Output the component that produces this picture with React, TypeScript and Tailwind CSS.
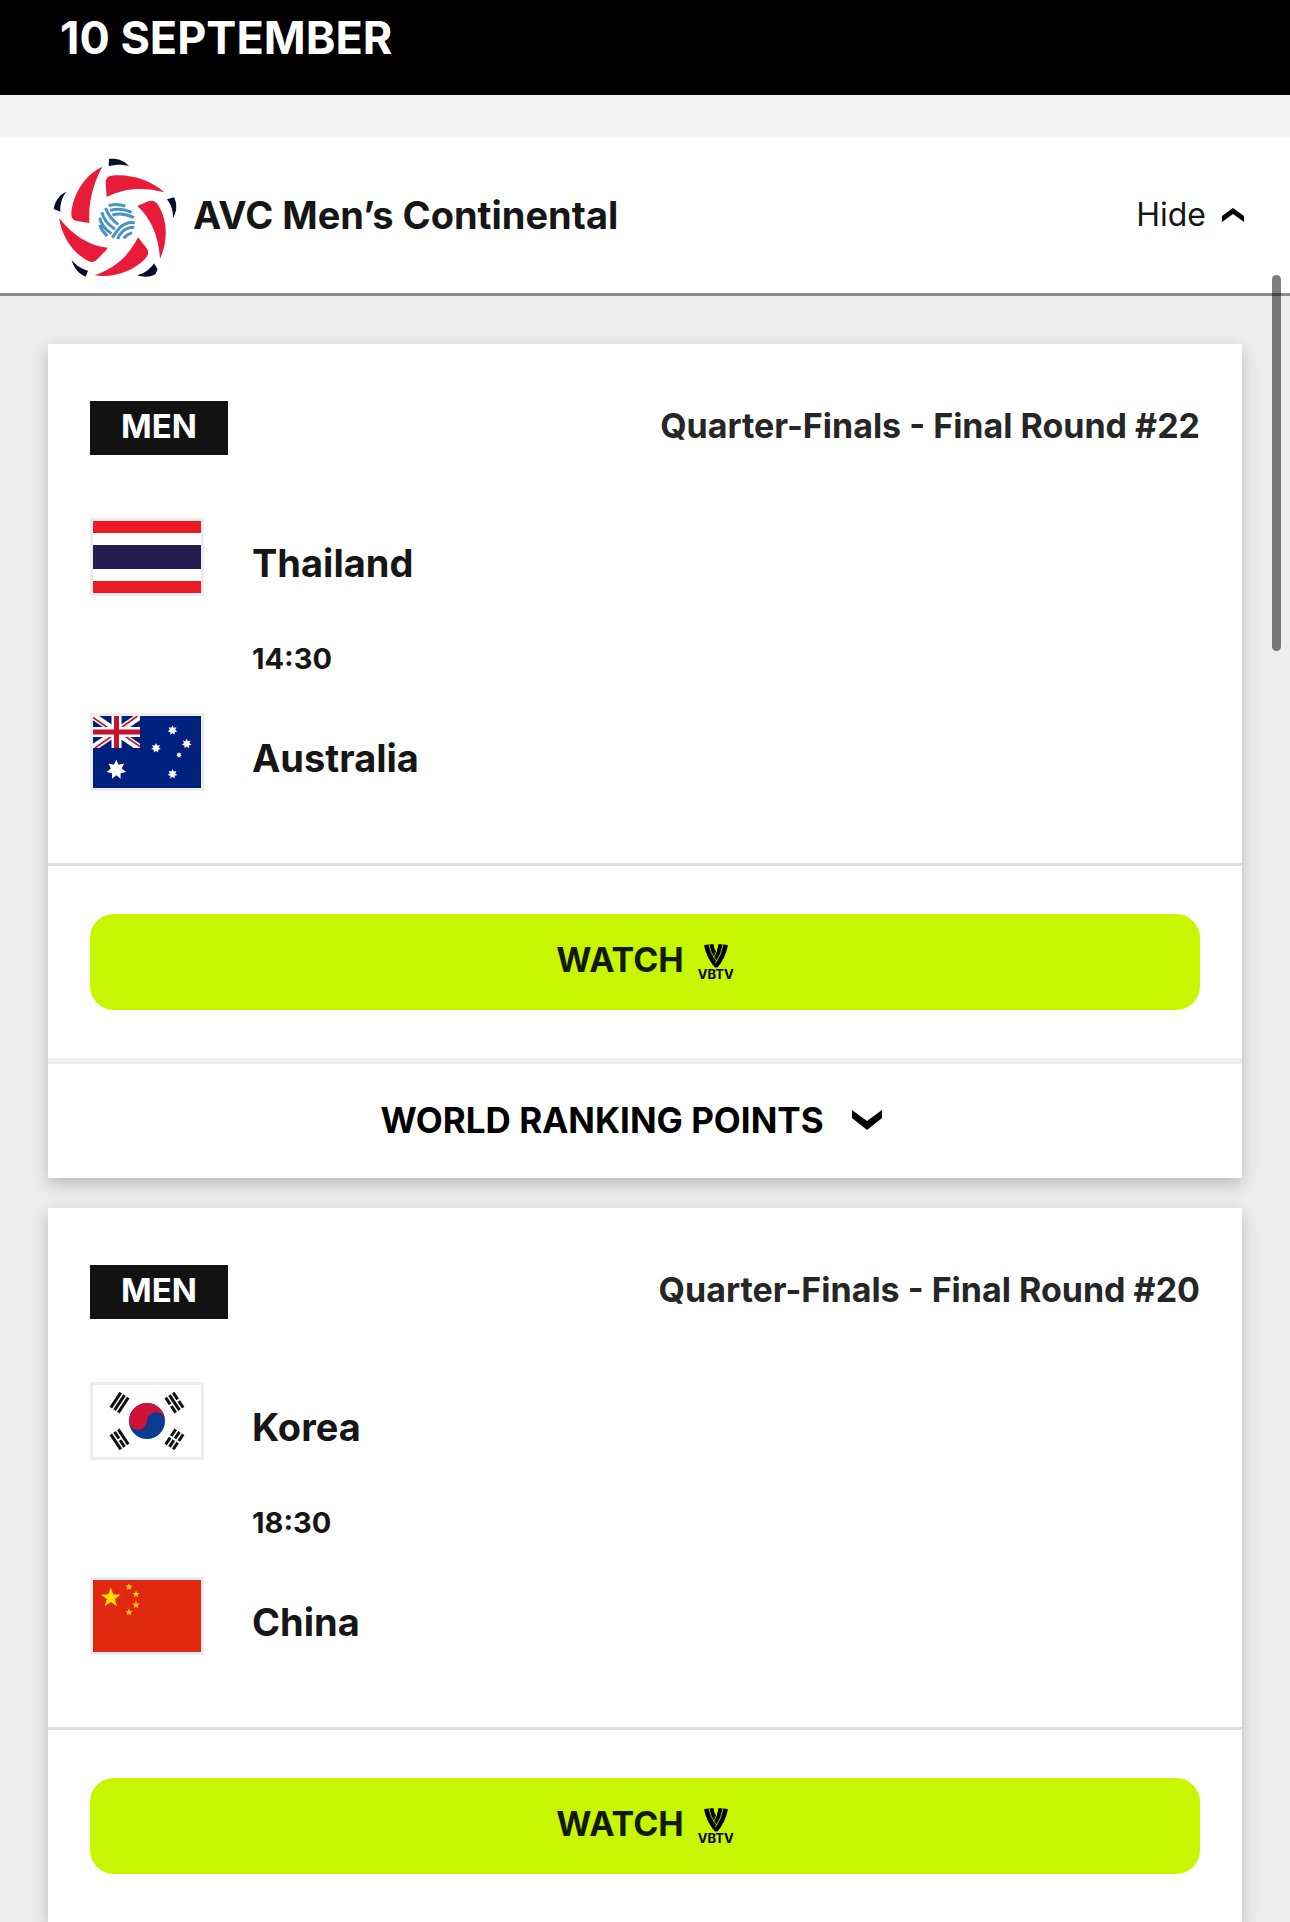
type Match = {
  round: string;
  time: string;
  ranking?: boolean;
  home: { name: string; flag: React.ReactNode };
  away: { name: string; flag: React.ReactNode };
};

function starPoints(cx: number, cy: number, r: number, inner: number, tips: number) {
  return Array.from({ length: tips * 2 }, (_, i) => {
    const a = (Math.PI * i) / tips - Math.PI / 2;
    const d = i % 2 ? r * inner : r;
    return `${(cx + d * Math.cos(a)).toFixed(2)},${(cy + d * Math.sin(a)).toFixed(2)}`;
  }).join(" ");
}

function ThailandFlag() {
  return (
    <svg viewBox="0 0 108 72" className="block w-full" aria-hidden="true">
      <rect width="108" height="72" fill="#fff" />
      <rect width="108" height="12" fill="#ed1c24" />
      <rect y="24" width="108" height="24" fill="#241d4f" />
      <rect y="60" width="108" height="12" fill="#ed1c24" />
    </svg>
  );
}

function AustraliaFlag() {
  const stars = [[79.5, 14.3, 5], [63, 32, 5], [93.7, 27.7, 5], [86, 39, 3], [79.5, 58, 5], [23.3, 53.7, 10]];
  return (
    <svg viewBox="0 0 108 72" className="block w-full" aria-hidden="true">
      <rect width="108" height="72" fill="#00207d" />
      <svg width="47" height="32" viewBox="0 0 47 32">
        <path d="M0 0 47 32M47 0 0 32" stroke="#fff" strokeWidth="7" />
        <path d="M0 1.5 21 16M26 16 47 30.5M44.5 0 25 14M22 18 2 32" stroke="#c4122f" strokeWidth="1.6" />
        <path d="M23.5 0V32M0 16H47" stroke="#fff" strokeWidth="10" />
        <path d="M23.5 0V32M0 16H47" stroke="#c4122f" strokeWidth="5" />
      </svg>
      {stars.map(([x, y, r]) => (
        <polygon key={`${x}-${y}`} points={starPoints(x, y, r, 0.55, 7)} fill="#fff" />
      ))}
    </svg>
  );
}

function KoreaFlag() {
  return (
    <svg viewBox="0 0 108 72" className="block w-full" aria-hidden="true">
      <rect width="108" height="72" fill="#fff" />
      <g transform="translate(54 36) rotate(33.7)">
        <path d="M-37.5-9V9M-33-9V9M-28.5-9V9" stroke="#111" strokeWidth="3" />
        <path d="M37.5-9V-1M37.5 1V9M33-9V-1M33 1V9M28.5-9V-1M28.5 1V9" stroke="#111" strokeWidth="3" />
      </g>
      <g transform="translate(54 36) rotate(-33.7)">
        <path d="M-37.5-9V9M-33-9V-1M-33 1V9M-28.5-9V9" stroke="#111" strokeWidth="3" />
        <path d="M37.5-9V-1M37.5 1V9M33-9V9M28.5-9V-1M28.5 1V9" stroke="#111" strokeWidth="3" />
      </g>
      <g transform="translate(54 36)">
        <circle r="18" fill="#0b3a91" />
        <path d="M-18 0A18 18 0 0 1 18 0A9 9 0 0 0 0 0A9 9 0 0 1 -18 0Z" fill="#cf1237" />
      </g>
    </svg>
  );
}

function ChinaFlag() {
  const small = [[36, 7], [43, 14.3], [43, 25], [36, 32.3]];
  return (
    <svg viewBox="0 0 108 72" className="block w-full" aria-hidden="true">
      <rect width="108" height="72" fill="#de2910" />
      <polygon points={starPoints(17.8, 17.8, 10.5, 0.4, 5)} fill="#ffde00" />
      {small.map(([x, y]) => (
        <polygon key={`${x}-${y}`} points={starPoints(x, y, 3.8, 0.45, 5)} fill="#ffc60a" />
      ))}
    </svg>
  );
}

function AvcLogo() {
  return (
    <svg viewBox="40 25 372 357" className="w-[124px] h-[119px] shrink-0 self-end" aria-hidden="true">
      <g fill="#e81c38">
        <path d="M188 51C140 73 103 125 95 188C94 205 99 212 112 214L149 220C146 164 157 108 188 51Z" />
        <path d="M374 128C335 92 272 72 216 78C203 80 198 88 198 100L201 142C252 115 313 111 374 128Z" />
        <path d="M293 169L326 155C338 151 347 154 354 164C384 210 386 274 361 327C357 261 335 207 293 169Z" />
        <path d="M295 263L321 296C328 306 327 315 319 324C282 365 222 385 165 377C221 358 266 322 295 263Z" />
        <path d="M58 205C68 263 100 311 146 334C157 339 166 337 173 328C187 315 197 304 205 294C151 290 100 258 58 205Z" />
      </g>
      <g fill="#080d2e">
        <path d="M208 28C232 25 254 33 268 50C250 44 230 44 207 50Z" />
        <path d="M80 126C60 134 46 153 42 178L62 186C61 163 66 144 80 126Z" />
        <path d="M382 149L403 143C413 162 412 187 400 205C401 185 395 166 382 149Z" />
        <path d="M96 331C102 355 117 373 138 381L145 363C125 358 110 348 96 331Z" />
        <path d="M293 377C313 384 335 382 347 374L354 359L343 341C331 359 316 370 293 377Z" />
      </g>
      <g fill="none" stroke="#4a93c7" strokeWidth="9">
        <path d="M207 168Q232 160 257 169M211 182Q244 173 276 188M218 196Q250 187 283 204" />
        <path d="M198 175Q206 202 236 225M187 188Q192 217 226 239M180 204Q184 229 215 252M180 226Q187 245 203 259" />
        <path d="M285 219Q258 216 240 234Q228 248 218 264M284 233Q262 233 248 246Q238 256 234 268M277 249Q262 254 252 266" />
      </g>
    </svg>
  );
}

function VbtvLogo() {
  return (
    <span className="flex flex-col items-center text-black">
      <svg viewBox="0 0 24 24" className="block w-6 h-6" aria-hidden="true">
        <path d="M0 1.2Q5 0 9.6.2Q10 5 12.2 8Q14 4 14.4.2Q20 0 24 1.2Q21.5 14 13.5 23.6H11Q2.5 14 0 1.2Z" />
        <path d="M4.8 0Q6 9 12.5 17M12.6 7Q11.5 10.5 9.5 13.5M19.2 0Q18 9 11.5 19" fill="none" stroke="#c8f500" strokeWidth="0.8" />
      </svg>
      <span className="text-[13px] leading-3 font-bold">VBTV</span>
    </span>
  );
}

function TeamRow({ name, flag }: { name: string; flag: React.ReactNode }) {
  return (
    <div className="flex items-start gap-12">
      <div className="w-[114px] border-3 border-[#ededf0]">{flag}</div>
      <p className="text-[38px] leading-[90px] font-bold text-[#161616]">{name}</p>
    </div>
  );
}

function MatchCard({ match }: { match: Match }) {
  return (
    <article className="bg-white shadow-[0_6px_16px_rgba(0,0,0,0.22)]">
      <div className="px-[42px] pt-[57px] pb-[60px]">
        <div className="flex items-start justify-between">
          <span className="bg-[#121212] px-[31px] pb-1 text-[33px] leading-[50px] font-bold text-white">MEN</span>
          <p className="text-[34px] leading-[50px] font-bold text-[#262626]">{match.round}</p>
        </div>
        <div className="mt-[63px]">
          <TeamRow {...match.home} />
          <p className="ml-[162px] pb-[3px] text-[29px] leading-[102px] font-bold text-[#161616]">{match.time}</p>
          <TeamRow {...match.away} />
        </div>
      </div>
      <div className="border-t-3 border-[#e0e0e0] px-[42px] py-12">
        <button className="flex h-24 w-full items-center justify-center gap-3.5 rounded-3xl bg-[#c8f500] text-[#121a00]">
          <span className="pb-1 text-[34px] leading-10 font-bold">WATCH</span>
          <VbtvLogo />
        </button>
      </div>
      {match.ranking && (
        <button className="flex h-30 w-full items-center justify-center gap-7 border-t-6 border-[#ededed] pr-7 pb-0.5 text-[35px] font-bold text-black">
          WORLD RANKING POINTS
          <svg viewBox="0 0 30 20" className="w-[30px] h-5" aria-hidden="true">
            <path d="M0 0 15 11 30 0V8L15 20 0 8Z" />
          </svg>
        </button>
      )}
    </article>
  );
}

const matches: Match[] = [
  {
    round: "Quarter-Finals - Final Round #22",
    time: "14:30",
    ranking: true,
    home: { name: "Thailand", flag: <ThailandFlag /> },
    away: { name: "Australia", flag: <AustraliaFlag /> },
  },
  {
    round: "Quarter-Finals - Final Round #20",
    time: "18:30",
    home: { name: "Korea", flag: <KoreaFlag /> },
    away: { name: "China", flag: <ChinaFlag /> },
  },
];

export default function App() {
  return (
    <div className="relative h-screen overflow-hidden bg-[#ededed] font-['Inter',sans-serif]">
      <header className="bg-black px-15 pt-3.5 pb-[33px]">
        <h1 className="text-[45px] leading-12 font-bold text-white">10 SEPTEMBER</h1>
      </header>
      <div className="h-[42px] bg-[#f5f5f5]" />
      <section>
        <div className="flex min-h-[159px] items-center border-b-3 border-[#8c8c8c] bg-white py-4 pr-[46px] pl-[53px] text-[#161616]">
          <AvcLogo />
          <h2 className="ml-4 text-[38px] leading-12 font-bold">AVC Men’s Continental</h2>
          <button className="ml-auto flex items-center gap-4 text-[32px] leading-10">
            Hide
            <svg viewBox="0 0 22 14" className="w-[22px] h-3.5" aria-hidden="true">
              <path d="M0 14V8L11 0 22 8V14L11 6Z" />
            </svg>
          </button>
        </div>
        <div className="flex flex-col gap-[30px] p-12">
          {matches.map((match) => (
            <MatchCard key={match.round} match={match} />
          ))}
        </div>
      </section>
      <div className="absolute top-[275px] right-[9px] h-[376px] w-[9px] rounded-full bg-black/50" />
    </div>
  );
}
